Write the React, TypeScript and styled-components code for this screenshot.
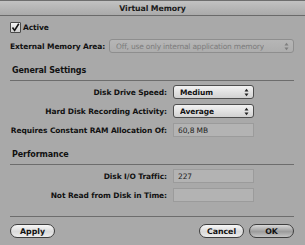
import styled, { createGlobalStyle } from "styled-components";

const GlobalStyle = createGlobalStyle`
  html, body {
    margin: 0;
    padding: 0;
    background: #a9a9a9;
  }
  body {
    font-family: "DejaVu Sans", "Liberation Sans", sans-serif;
  }
`;

function Arrows() {
  return (
    <svg width="5" height="9" viewBox="0 0 5 9">
      <path d="M0.5 3.5 L2.5 0.8 L4.5 3.5 Z" fill="#222" />
      <path d="M0.5 5.5 L2.5 8.2 L4.5 5.5 Z" fill="#222" />
    </svg>
  );
}

export default function App() {
  return (
    <Window>
      <GlobalStyle />
      <TitleBar>Virtual Memory</TitleBar>
      <Body>
        <CheckRow>
          <CheckBox>
            <svg width="9" height="9" viewBox="0 0 9 9">
              <path
                d="M1.5 4.5 L3.6 7.4 L7.8 0.8"
                fill="none"
                stroke="#111"
                strokeWidth="1.6"
              />
            </svg>
          </CheckBox>
          <Label>Active</Label>
        </CheckRow>
        <ExternalRow>
          <Label>External Memory Area:</Label>
          <Popup $disabled $width={185}>
            <span>Off, use only internal application memory</span>
            <Arrows />
          </Popup>
        </ExternalRow>

        <SectionTitle>General Settings</SectionTitle>
        <Rule />
        <Form>
          <FormLabel>Disk Drive Speed:</FormLabel>
          <Popup>
            <span>Medium</span>
            <Arrows />
          </Popup>
          <FormLabel>Hard Disk Recording Activity:</FormLabel>
          <Popup>
            <span>Average</span>
            <Arrows />
          </Popup>
          <FormLabel>Requires Constant RAM Allocation Of:</FormLabel>
          <Field>60,8 MB</Field>
        </Form>

        <SectionTitle>Performance</SectionTitle>
        <Rule />
        <Form>
          <FormLabel>Disk I/O Traffic:</FormLabel>
          <Field>227</Field>
          <FormLabel>Not Read from Disk in Time:</FormLabel>
          <Field />
        </Form>

        <Rule $bottom />
        <ButtonBar>
          <Button>Apply</Button>
          <Spacer />
          <Button>Cancel</Button>
          <Button $default>OK</Button>
        </ButtonBar>
      </Body>
    </Window>
  );
}

const Window = styled.div`
  width: 305px;
  height: 245px;
  background: #a9a9a9;
  display: flex;
  flex-direction: column;
  color: #111;
  font-size: 7.5px;
  letter-spacing: -0.1px;
  font-weight: bold;
`;

const TitleBar = styled.div`
  height: 14px;
  border-top: 1px solid #6e6e6e;
  border-bottom: 1px solid #6a6a6a;
  background: linear-gradient(#c2c2c2, #aaaaaa);
  display: flex;
  align-items: center;
  justify-content: center;
  font-size: 7.8px;
  color: #1a1a1a;
`;

const Body = styled.div`
  display: flex;
  flex-direction: column;
  padding: 5px 11px 0 10px;
`;

const CheckRow = styled.div`
  display: flex;
  align-items: center;
  gap: 2px;
  height: 13px;
`;

const CheckBox = styled.div`
  width: 11px;
  height: 11px;
  box-sizing: border-box;
  border: 1px solid #4a4a4a;
  border-radius: 1px;
  background: linear-gradient(#f4f4f4, #cfcfcf);
  display: flex;
  align-items: flex-start;
  justify-content: center;
`;

const Label = styled.span`
  white-space: nowrap;
`;

const ExternalRow = styled.div`
  display: flex;
  align-items: center;
  justify-content: space-between;
  margin-top: 5px;
  height: 14px;
`;

const Popup = styled.div<{ $disabled?: boolean; $width?: number }>`
  box-sizing: border-box;
  height: 14px;
  ${(p) => (p.$width ? `width: ${p.$width}px;` : "")}
  display: flex;
  align-items: center;
  justify-content: space-between;
  padding: 0 4px 0 6px;
  border-radius: 3px;
  white-space: nowrap;
  border: 1px solid ${(p) => (p.$disabled ? "#8e8e8e" : "#4e4e4e")};
  background: ${(p) =>
    p.$disabled
      ? "linear-gradient(#b6b6b6, #adadad)"
      : "linear-gradient(#f2f2f2, #d2d2d2)"};
  color: ${(p) => (p.$disabled ? "#7c7c7c" : "#111")};
  font-weight: ${(p) => (p.$disabled ? "normal" : "bold")};
  letter-spacing: ${(p) => (p.$disabled ? "-0.2px" : "-0.1px")};
  span {
    overflow: hidden;
  }
  svg {
    flex: none;
    opacity: ${(p) => (p.$disabled ? 0.35 : 1)};
  }
`;

const SectionTitle = styled.div`
  margin-top: 13px;
  padding-left: 2px;
  height: 10px;
  line-height: 10px;
  font-size: 8px;
`;

const Rule = styled.div<{ $bottom?: boolean }>`
  height: 1px;
  background: #6d6d6d;
  margin-top: ${(p) => (p.$bottom ? "14px" : "4px")};
`;

const Form = styled.div`
  display: grid;
  grid-template-columns: 157px 81px;
  column-gap: 6px;
  row-gap: 5px;
  margin-top: 4px;
  align-items: center;
`;

const FormLabel = styled.span`
  text-align: right;
  white-space: nowrap;
`;

const Field = styled.div`
  box-sizing: border-box;
  height: 14px;
  border: 1px solid #9b9b9b;
  background: #b3b3b3;
  display: flex;
  align-items: center;
  padding-left: 4px;
  font-weight: normal;
  color: #1e1e1e;
`;

const ButtonBar = styled.div`
  display: flex;
  align-items: center;
  gap: 5px;
  margin-top: 7px;
`;

const Spacer = styled.div`
  flex: 1;
`;

const Button = styled.button<{ $default?: boolean }>`
  width: 45px;
  height: 14px;
  border-radius: 7px;
  border: 1px solid #3e3e3e;
  padding: 0;
  font-family: inherit;
  font-size: 7.8px;
  font-weight: bold;
  color: #111;
  background: ${(p) =>
    p.$default
      ? "linear-gradient(#d8d8d8, #9c9c9c 55%, #c4c4c4)"
      : "linear-gradient(#f8f8f8, #dadada 55%, #ececec)"};
`;
